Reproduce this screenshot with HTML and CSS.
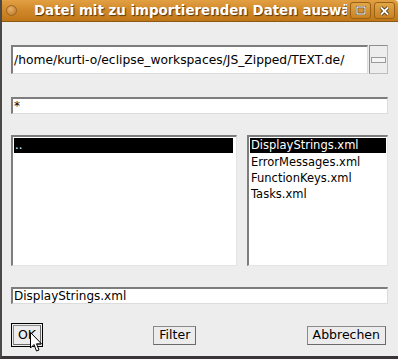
FILE: index.html
```html
<!DOCTYPE html>
<html lang="de">
<head>
  <meta charset="UTF-8" />
  <title>Datei mit zu importierenden Daten auswählen</title>
  <link rel="stylesheet" href="styles.css">
</head>
<body>
  <div class="window">
    <div class="titlebar">
      <span class="menu-dot"></span>
      <span class="title">Datei mit zu importierenden Daten auswählen</span>
      <span class="tb-btn">
        <svg width="10" height="9" viewBox="0 0 10 9"><rect x="1" y="1" width="8" height="7" fill="none" stroke="#3a2a10" stroke-width="2.4"/><rect x="1" y="1" width="8" height="7" fill="none" stroke="#fff" stroke-width="1.2"/></svg>
      </span>
      <span class="tb-btn">
        <svg width="11" height="10" viewBox="0 0 11 10"><path d="M2 1.5 L9 8.5 M9 1.5 L2 8.5" stroke="#3a2a10" stroke-width="3.4"/><path d="M2 1.5 L9 8.5 M9 1.5 L2 8.5" stroke="#fff" stroke-width="1.8"/></svg>
      </span>
    </div>

    <div class="content">
      <div class="path-row">
        <div class="field path-field">/home/kurti-o/eclipse_workspaces/JS_Zipped/TEXT.de/</div>
        <div class="choice-btn"><span class="choice-mark"></span></div>
      </div>

      <div class="field small-field filter-field">*</div>

      <div class="lists">
        <div class="list dir-list">
          <div class="item selected">..</div>
        </div>
        <div class="list file-list">
          <div class="item selected">DisplayStrings.xml</div>
          <div class="item">ErrorMessages.xml</div>
          <div class="item">FunctionKeys.xml</div>
          <div class="item">Tasks.xml</div>
        </div>
      </div>

      <div class="field small-field name-field">DisplayStrings.xml</div>

      <div class="buttons">
        <div class="focus-ring"><button class="btn">OK</button></div>
        <button class="btn">Filter</button>
        <button class="btn">Abbrechen</button>
      </div>

      <svg class="cursor" width="14" height="21" viewBox="0 0 14 21">
        <path d="M0.5 0.5 L0.5 16 L4 12.5 L6.5 19 L9 18 L6.5 11.8 L11.5 11.8 Z" fill="#fff" stroke="#000" stroke-width="1"/>
      </svg>
    </div>
  </div>
</body>
</html>
```

FILE: styles.css
```css
body {
  margin: 0;
  background: #ededed;
  font-family: "DejaVu Sans", sans-serif;
  color: #000;
}
.window {
  width: 398px;
  height: 359px;
  box-sizing: border-box;
  border-left: 2px solid #4b4848;
  border-bottom: 3px solid #3b3439;
  background: #ededed;
  position: relative;
  overflow: hidden;
}
.titlebar {
  height: 22px;
  box-sizing: border-box;
  display: flex;
  align-items: center;
  padding: 0 3px 0 6px;
  background: linear-gradient(#e2a043, #cf8829 50%, #c07719);
  border-bottom: 1px solid #8c5816;
  border-radius: 4px 4px 0 0;
  margin-left: -2px;
}
.menu-dot {
  width: 9px;
  height: 9px;
  border-radius: 50%;
  background: radial-gradient(circle at 40% 35%, #e8b06a, #b87424);
  border: 1px solid #9a6420;
  flex: none;
  margin-right: 17px;
}
.title {
  flex: 1;
  min-width: 0;
  white-space: nowrap;
  overflow: hidden;
  color: #fff;
  font-weight: bold;
  font-size: 13.4px;
  text-shadow: 1px 1px 1px #5a3508;
}
.tb-btn {
  flex: none;
  width: 21px;
  height: 17px;
  margin-left: 3px;
  box-sizing: border-box;
  border: 1px solid #9a6014;
  border-radius: 3px;
  background: linear-gradient(#e0a648, #c9821f);
  display: flex;
  align-items: center;
  justify-content: center;
}
.content {
  padding: 23px 10px 0 9px;
}
.field {
  box-sizing: border-box;
  background: #fff;
  border-style: solid;
  border-width: 2px 1px 1px 2px;
  border-color: #7d7d7d #dcdcdc #dcdcdc #7d7d7d;
  font-size: 12px;
  white-space: nowrap;
  overflow: hidden;
  padding-left: 1px;
}
.path-row {
  display: flex;
  gap: 1px;
  height: 29px;
}
.path-field {
  flex: 1;
  display: flex;
  align-items: center;
  font-size: 12.3px;
}
.choice-btn {
  width: 19px;
  box-sizing: border-box;
  border: 1px solid #8e8e8e;
  border-right-color: #bdbdbd;
  border-bottom-color: #bdbdbd;
  display: flex;
  align-items: center;
  justify-content: center;
}
.choice-mark {
  width: 13px;
  height: 4px;
  border: 1px solid #9a9a9a;
  background: #f4f4f4;
}
.small-field {
  height: 17px;
  line-height: 14px;
}
.filter-field {
  margin-top: 23px;
}
.lists {
  display: flex;
  gap: 10px;
  margin-top: 21px;
  height: 131px;
}
.list {
  box-sizing: border-box;
  background: #fff;
  border-style: solid;
  border-width: 2px 1px 1px 2px;
  border-color: #7d7d7d #e4e4e4 #e4e4e4 #7d7d7d;
  padding: 1px 1px 0 1px;
  font-size: 11.5px;
}
.dir-list {
  width: 226px;
  padding: 1px 3px 0 1px;
}
.file-list {
  flex: 1;
}
.item {
  height: 16px;
  line-height: 16px;
  padding-left: 1px;
  white-space: nowrap;
}
.item.selected {
  height: 15px;
  line-height: 15px;
  margin-bottom: 1px;
  background: #000;
  color: #fff;
}
.name-field {
  margin-top: 21px;
}
.buttons {
  margin-top: 19px;
  display: flex;
  justify-content: space-between;
  align-items: center;
  padding-right: 2px;
}
.focus-ring {
  border: 1px solid #000;
  padding: 0;
  display: flex;
}
.btn {
  font-family: "DejaVu Sans", sans-serif;
  font-size: 12.5px;
  background: #ececec;
  border: 1px solid #8a8a8a;
  border-right-color: #6a6a6a;
  border-bottom-color: #6a6a6a;
  padding: 0 5px;
  height: 19px;
  line-height: 16px;
  color: #000;
  margin: 0;
}
.focus-ring .btn {
  width: 28px;
  height: 20px;
  margin: 1px;
  padding: 0 2px;
}
.cursor {
  position: absolute;
  left: 28px;
  top: 332px;
}
```
